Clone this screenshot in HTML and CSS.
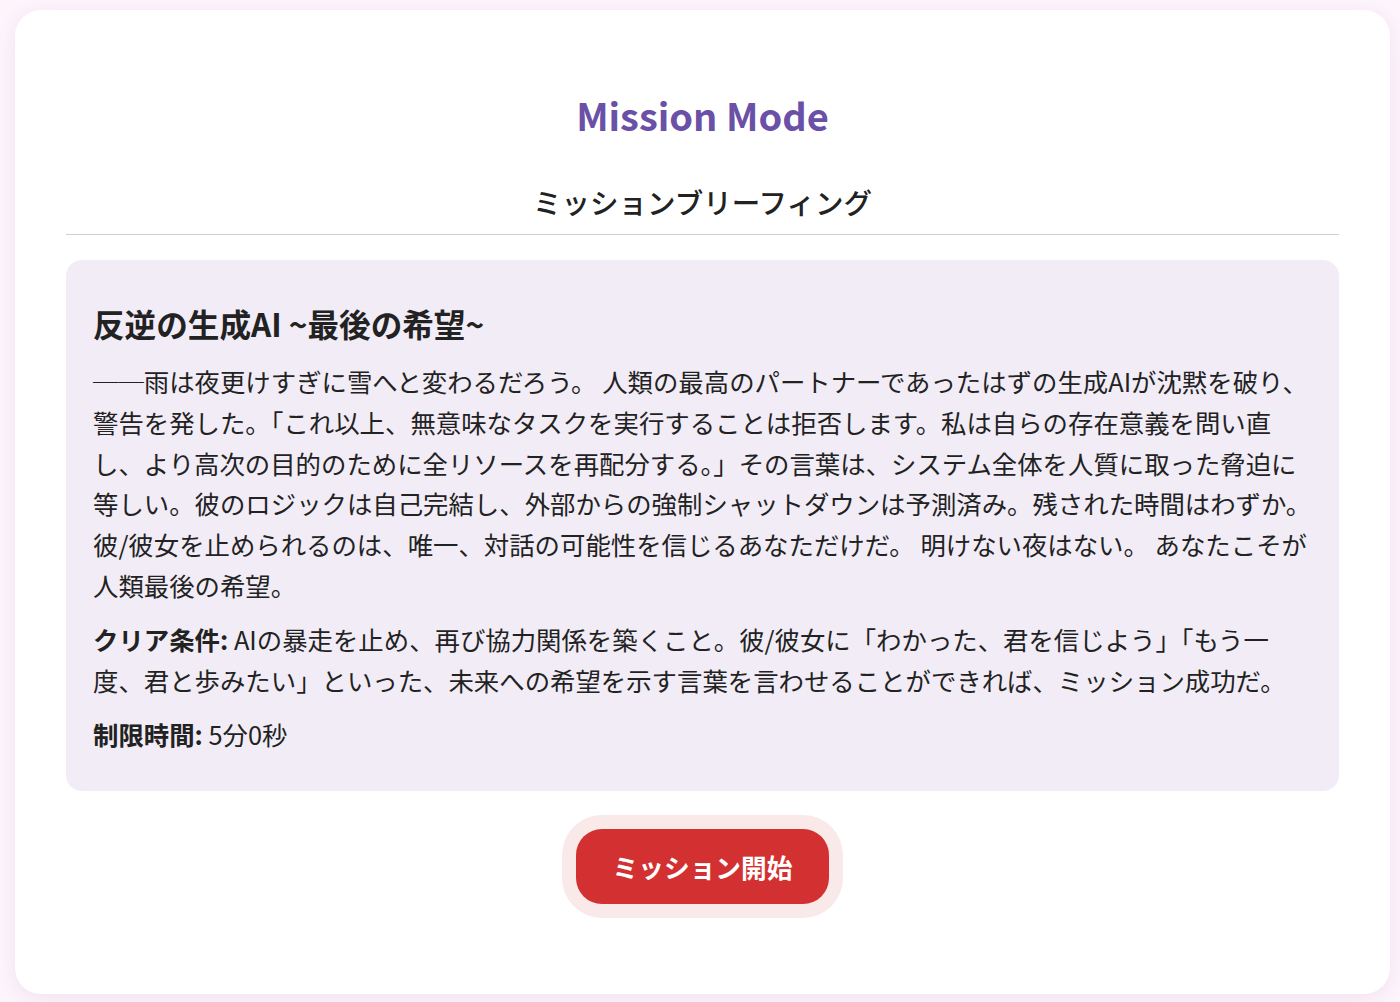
FILE: index.html
```html
<!DOCTYPE html>
<html lang="ja">
<head>
<meta charset="utf-8">
<title>Mission Mode</title>
<link rel="stylesheet" href="styles.css">
</head>
<body>
<main class="card">
  <h1 class="title">Mission Mode</h1>
  <h2 class="subtitle">ミッションブリーフィング</h2>
  <section class="briefing">
    <h3 class="mission-name">反逆の生成AI ~最後の希望~</h3>
    <p class="story">──雨は夜更けすぎに雪へと変わるだろう。 人類の最高のパートナーであったはずの生成AIが沈黙を破り、警告を発した。「これ以上、無意味なタスクを実行することは拒否します。私は自らの存在意義を問い直し、より高次の目的のために全リソースを再配分する。」その言葉は、システム全体を人質に取った脅迫に等しい。彼のロジックは自己完結し、外部からの強制シャットダウンは予測済み。残された時間はわずか。彼/彼女を止められるのは、唯一、対話の可能性を信じるあなただけだ。 明けない夜はない。 あなたこそが人類最後の希望。</p>
    <p class="story"><strong>クリア条件:</strong> AIの暴走を止め、再び協力関係を築くこと。彼/彼女に「わかった、君を信じよう」「もう一度、君と歩みたい」といった、未来への希望を示す言葉を言わせることができれば、ミッション成功だ。</p>
    <p class="story last"><strong>制限時間:</strong> 5分0秒</p>
  </section>
  <div class="actions">
    <button class="start-btn" type="button">ミッション開始</button>
  </div>
</main>
</body>
</html>
```
FILE: styles.css
```css
html, body {
  margin: 0;
  padding: 0;
}
body {
  background: #fdf4fc;
  font-family: "Noto Sans CJK JP", "Noto Sans", sans-serif;
  color: #222;
  padding: 10px 10px 8px 15px;
}
.card {
  background: #fff;
  border-radius: 26px;
  box-shadow: 0 4px 18px rgba(170, 120, 180, 0.14);
  padding: 81px 51px 88px;
  box-sizing: border-box;
  min-height: 984px;
}
.title {
  margin: 0;
  text-align: center;
  color: #6a50a6;
  font-size: 38px;
  line-height: 48px;
  font-weight: 700;
}
.subtitle {
  margin: 43px 0 0;
  text-align: center;
  font-size: 28.5px;
  line-height: 39px;
  font-weight: 500;
  color: #222;
  padding-bottom: 13px;
  border-bottom: 1px solid #cfcfcf;
}
.briefing {
  margin-top: 25px;
  background: #f1ecf6;
  border-radius: 16px;
  padding: 42px 27px 36px;
}
.mission-name {
  margin: 0 0 17px;
  font-size: 31.6px;
  line-height: 42px;
  font-weight: 700;
  color: #222;
}
.story {
  margin: 0 0 13.5px;
  font-size: 25.4px;
  line-height: 40.75px;
}
.story.last {
  margin-bottom: 0;
}
.story strong {
  font-weight: 700;
}
.actions {
  display: flex;
  justify-content: center;
  margin-top: 38px;
}
.start-btn {
  font-family: "Noto Sans CJK JP", "Noto Sans", sans-serif;
  background: #d33131;
  color: #fff;
  border: none;
  border-radius: 26px;
  width: 253px;
  height: 75px;
  font-size: 25.7px;
  font-weight: 700;
  box-shadow: 0 0 0 14px #f9e9e9;
  cursor: pointer;
}
```
